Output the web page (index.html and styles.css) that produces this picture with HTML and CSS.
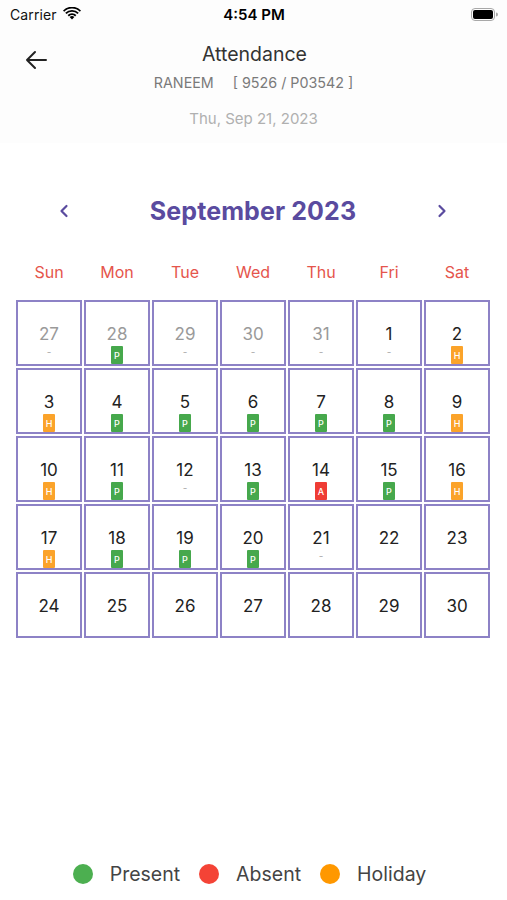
FILE: index.html
```html
<!DOCTYPE html>
<html>
<head>
<meta charset="utf-8">
<link rel="stylesheet" href="styles.css">
</head>
<body>
<div class="page">
  <header class="top">
    <div class="status">
      <div class="status-left">
        <span class="carrier">Carrier</span>
        <svg class="wifi" width="18" height="13" viewBox="0 0 18 13">
          <path d="M9 12.6 L6.6 10.1 A3.4 3.4 0 0 1 11.4 10.1 Z" fill="#000"/>
          <path d="M4.6 8.1 A6.3 6.3 0 0 1 13.4 8.1 L12.1 9.4 A4.5 4.5 0 0 0 5.9 9.4 Z" fill="#000"/>
          <path d="M2.2 5.7 A9.7 9.7 0 0 1 15.8 5.7 L14.5 7 A7.9 7.9 0 0 0 3.5 7 Z" fill="#000"/>
          <path d="M0 3.4 A12.8 12.8 0 0 1 18 3.4 L16.8 4.7 A11 11 0 0 0 1.2 4.7 Z" fill="#000"/>
        </svg>
      </div>
      <span class="time">4:54 PM</span>
      <div class="status-right">
        <svg class="battery" width="27" height="13" viewBox="0 0 27 13">
          <rect x="0.5" y="0.5" width="23" height="12" rx="3.5" fill="none" stroke="#a8a8a8"/>
          <rect x="2" y="2" width="20" height="9" rx="2" fill="#000"/>
          <path d="M25 4.5 A2 2 0 0 1 25 8.5 Z" fill="#a8a8a8"/>
        </svg>
      </div>
    </div>
    <div class="appbar">
      <svg class="back" width="22" height="20" viewBox="0 0 22 20">
        <path d="M21 10 H2 M10 2 L2 10 L10 18" fill="none" stroke="#222" stroke-width="2" stroke-linecap="round" stroke-linejoin="round"/>
      </svg>
      <div class="title">Attendance</div>
      <div class="subtitle"><span>RANEEM</span><span>[ 9526 / P03542 ]</span></div>
      <div class="date">Thu, Sep 21, 2023</div>
    </div>
  </header>

  <section class="calendar">
    <div class="nav">
      <svg class="chev" width="10" height="14" viewBox="0 0 10 14"><path d="M7.5 2 L2.5 7 L7.5 12" fill="none" stroke="#5a4b9f" stroke-width="2.2" stroke-linecap="round" stroke-linejoin="round"/></svg>
      <div class="month">September 2023</div>
      <svg class="chev" width="10" height="14" viewBox="0 0 10 14"><path d="M2.5 2 L7.5 7 L2.5 12" fill="none" stroke="#5a4b9f" stroke-width="2.2" stroke-linecap="round" stroke-linejoin="round"/></svg>
    </div>
    <div class="weekdays">
      <span>Sun</span><span>Mon</span><span>Tue</span><span>Wed</span><span>Thu</span><span>Fri</span><span>Sat</span>
    </div>
    <div class="grid">
      <div class="cell out"><span class="num">27</span><span class="dash">-</span></div>
      <div class="cell out"><span class="num">28</span><span class="badge p">P</span></div>
      <div class="cell out"><span class="num">29</span><span class="dash">-</span></div>
      <div class="cell out"><span class="num">30</span><span class="dash">-</span></div>
      <div class="cell out"><span class="num">31</span><span class="dash">-</span></div>
      <div class="cell"><span class="num">1</span><span class="dash">-</span></div>
      <div class="cell"><span class="num">2</span><span class="badge h">H</span></div>

      <div class="cell"><span class="num">3</span><span class="badge h">H</span></div>
      <div class="cell"><span class="num">4</span><span class="badge p">P</span></div>
      <div class="cell"><span class="num">5</span><span class="badge p">P</span></div>
      <div class="cell"><span class="num">6</span><span class="badge p">P</span></div>
      <div class="cell"><span class="num">7</span><span class="badge p">P</span></div>
      <div class="cell"><span class="num">8</span><span class="badge p">P</span></div>
      <div class="cell"><span class="num">9</span><span class="badge h">H</span></div>

      <div class="cell"><span class="num">10</span><span class="badge h">H</span></div>
      <div class="cell"><span class="num">11</span><span class="badge p">P</span></div>
      <div class="cell"><span class="num">12</span><span class="dash">-</span></div>
      <div class="cell"><span class="num">13</span><span class="badge p">P</span></div>
      <div class="cell"><span class="num">14</span><span class="badge a">A</span></div>
      <div class="cell"><span class="num">15</span><span class="badge p">P</span></div>
      <div class="cell"><span class="num">16</span><span class="badge h">H</span></div>

      <div class="cell"><span class="num">17</span><span class="badge h">H</span></div>
      <div class="cell"><span class="num">18</span><span class="badge p">P</span></div>
      <div class="cell"><span class="num">19</span><span class="badge p">P</span></div>
      <div class="cell"><span class="num">20</span><span class="badge p">P</span></div>
      <div class="cell"><span class="num">21</span><span class="dash">-</span></div>
      <div class="cell"><span class="num">22</span></div>
      <div class="cell"><span class="num">23</span></div>

      <div class="cell"><span class="num">24</span></div>
      <div class="cell"><span class="num">25</span></div>
      <div class="cell"><span class="num">26</span></div>
      <div class="cell"><span class="num">27</span></div>
      <div class="cell"><span class="num">28</span></div>
      <div class="cell"><span class="num">29</span></div>
      <div class="cell"><span class="num">30</span></div>
    </div>
  </section>

  <footer class="legend">
    <div class="item"><span class="dot g"></span><span>Present</span></div>
    <div class="item"><span class="dot r"></span><span>Absent</span></div>
    <div class="item"><span class="dot o"></span><span>Holiday</span></div>
  </footer>
</div>
</body>
</html>
```

FILE: styles.css
```css
* { box-sizing: border-box; }
html, body { margin: 0; padding: 0; background: #fff; }
body { font-family: Inter, "Noto Sans", "Liberation Sans", sans-serif; color: #222; }

.page {
  width: 507px;
  height: 900px;
  display: flex;
  flex-direction: column;
}

.top { background: #fdfdfd; }

.status {
  height: 28px;
  display: flex;
  align-items: center;
  justify-content: space-between;
  padding: 0 9px 0 10px;
}
.status-left { display: flex; align-items: center; gap: 6px; width: 100px; }
.carrier { font-size: 14px; color: #111; letter-spacing: 0.1px; }
.wifi { margin-top: -1px; }
.time { font-size: 15px; font-weight: 600; color: #000; }
.status-right { width: 100px; display: flex; justify-content: flex-end; }

.appbar {
  position: relative;
  padding: 14px 0 15px;
  display: flex;
  flex-direction: column;
  align-items: center;
}
.back { position: absolute; left: 25px; top: 22px; }
.title { font-size: 19.5px; line-height: 24px; color: #333; padding-left: 2px; }
.subtitle {
  margin-top: 8px;
  font-size: 14.3px;
  line-height: 17px;
  color: #7a7a7a;
  display: flex;
  gap: 19px;
}
.date { margin-top: 19px; font-size: 15px; line-height: 18px; color: #b0b0b0; }

.calendar { padding: 0 16px 0 15px; }
.nav {
  margin-top: 54px;
  height: 28px;
  display: flex;
  align-items: center;
  justify-content: space-between;
  padding: 0 44px 0 44px;
}
.month { font-size: 25px; font-weight: 700; color: #5a4b9f; line-height: 28px; letter-spacing: 0.1px; }

.weekdays {
  margin-top: 37px;
  display: grid;
  grid-template-columns: repeat(7, 68px);
  text-align: center;
  font-size: 16px;
  line-height: 20px;
  color: #e5554c;
}

.grid {
  margin-top: 17px;
  display: grid;
  grid-template-columns: repeat(7, 68px);
}
.cell {
  margin: 1px;
  height: 66px;
  border: 2px solid #8d82c6;
  display: flex;
  flex-direction: column;
  align-items: center;
  padding-top: 22px;
}
.num { font-size: 17px; line-height: 20px; color: #222; }
.out .num { color: #9a9a9a; }
.dash { font-size: 10px; line-height: 12px; color: #aaa; margin-top: 2px; }
.badge {
  margin-top: 2px;
  width: 12px;
  height: 18px;
  border-radius: 1px;
  color: #fff;
  font-size: 9px;
  font-weight: 500;
  display: flex;
  align-items: center;
  justify-content: center;
}
.badge.p { background: #46a84c; }
.badge.h { background: #fba32a; }
.badge.a { background: #ef3c34; }

.legend {
  margin-top: auto;
  padding: 0 8px 14px 0;
  display: flex;
  justify-content: center;
  gap: 19px;
}
.item { display: flex; align-items: center; gap: 17px; font-size: 19.5px; line-height: 24px; color: #444; }
.dot { width: 20px; height: 20px; border-radius: 50%; }
.dot.g { background: #4caf50; }
.dot.r { background: #f44336; }
.dot.o { background: #ff9800; }
```
